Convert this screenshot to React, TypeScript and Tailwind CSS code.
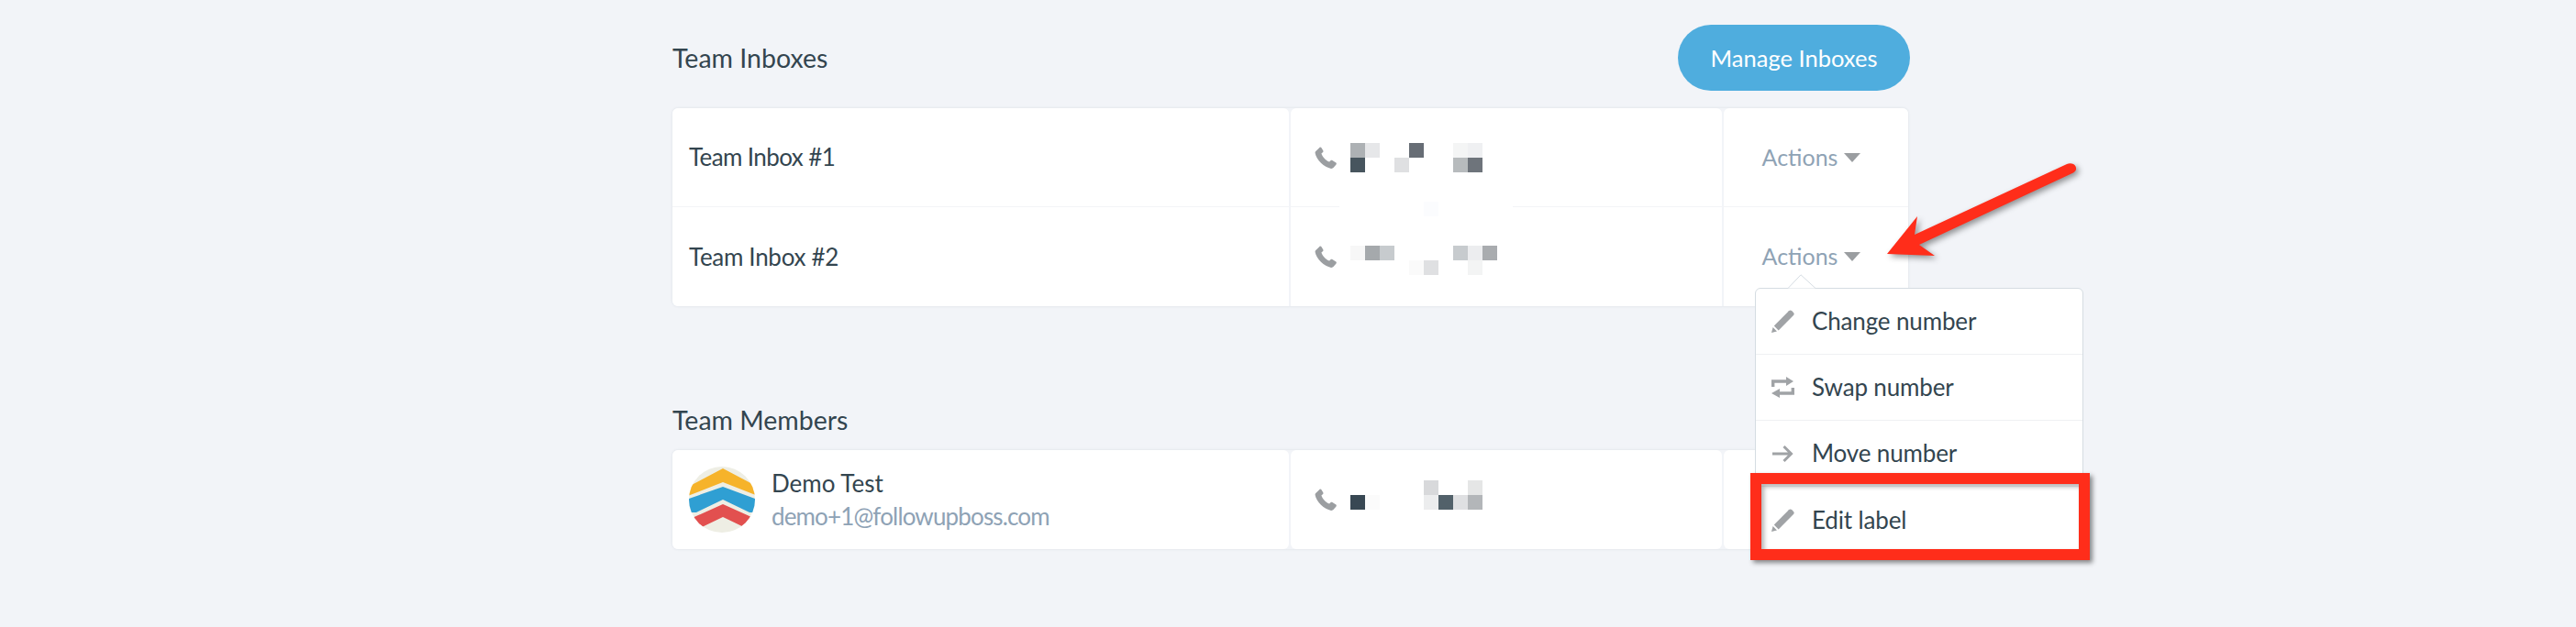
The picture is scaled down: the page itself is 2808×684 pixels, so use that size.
import React from "react";

const font = "font-['Lato','Liberation_Sans',sans-serif]";

type Block = [number, number, string];

const mosaicOne: Block[] = [
  [0, 0, "#adb1b4"], [16, 0, "#e6e7e9"], [64, 0, "#676d75"], [112, 0, "#f4f5f5"], [128, 0, "#eff0f2"],
  [0, 16, "#47555e"], [48, 16, "#dfe0e2"], [112, 16, "#b7bbbd"], [128, 16, "#6e747b"],
];
const mosaicTwo: Block[] = [
  [0, 0, "#f7f7f7"], [16, 0, "#a5a9ac"], [32, 0, "#c7cbce"], [112, 0, "#c7cbce"], [128, 0, "#ecedef"], [144, 0, "#a9acaf"],
  [64, 16, "#fafafa"], [80, 16, "#dfe0e2"], [128, 16, "#f3f4f4"],
];
const mosaicThree: Block[] = [
  [80, 0, "#d8d9db"], [128, 0, "#e5e6e6"],
  [0, 16, "#384853"], [16, 16, "#fbfbfb"], [80, 16, "#ecedee"], [96, 16, "#52616a"], [112, 16, "#dfe0e2"], [128, 16, "#b3b6b9"],
];

const PhoneIcon = () => (
  <svg width="24" height="24" viewBox="0 0 24 24" className="shrink-0">
    <path d="M1 5.2 5.4.9c.6-.6 1.4-.5 1.9.1l2 3.2c.4.6.3 1.2-.2 1.7L7.4 7.500c1.100 3.600 4.700 7.500 8.700 9.100l1.500-1.500c.5-.5 1.200-.6 1.800-.1l3.900 2.600c.6.4.7 1.200.2 1.800l-2.800 3.400c-.7.800-1.600 1.200-2.700 1.100C10.500 22.800 1.800 14.500.6 7.100.5 6.400.6 5.700 1 5.200Z" fill="#9b9ea1" />
  </svg>
);

const Mosaic = ({ blocks, className = "" }: { blocks: Block[]; className?: string }) => (
  <svg width="160" height="32" className={`shrink-0 ml-[15px] ${className}`}>
    {blocks.map(([x, y, c]) => (
      <rect key={`${x}-${y}`} x={x} y={y} width="16" height="16" fill={c} />
    ))}
  </svg>
);

const Caret = () => <span className="w-0 h-0 border-x-[9px] border-x-transparent border-t-[10px] border-t-[#9b9ea1]" />;

const Actions = () => (
  <span className="flex items-center gap-[7px] pr-[10px] text-[25px] text-[#8fa3b5]">
    Actions
    <Caret />
  </span>
);

const PencilIcon = () => (
  <svg width="25" height="25" viewBox="0 0 25 25">
    <path d="M0 25 1.600 19 6 23.400Z" fill="#a0a3a6" />
    <path d="M2.800 17.500 18.900 1.300c1-1 2.300-1 3.200-.2l1.900 1.900c.9.900.9 2.200 0 3.100L7.700 22.400Z" fill="#a0a3a6" />
  </svg>
);

const SwapIcon = () => (
  <svg width="25" height="23" viewBox="0 0 25 23" fill="none">
    <path d="M1.700 11V5H17M23.300 12v6H8" stroke="#a0a3a6" strokeWidth="3.400" />
    <path d="M16 0l8 5-8 5ZM9 13l-9 5 9 5Z" fill="#a0a3a6" />
  </svg>
);

const MoveIcon = () => (
  <svg width="23" height="20" viewBox="0 0 23 20" fill="none">
    <path d="M0 10H20.500M12.500 2l8 8-8 8" stroke="#a0a3a6" strokeWidth="3" />
  </svg>
);

const Avatar = () => (
  <svg width="72" height="72" viewBox="0 0 72 72" className="rounded-full shrink-0 bg-[#eeeee4]">
    <path d="M37 2 75 22V32L37 17-1 32V22Z" fill="#f6b32a" />
    <path d="M37 22 75 36V50H66L37 36 8 50H-3V36Z" fill="#2f9fd3" />
    <path d="M37 41 75 58V68H64L37 55 10 68H-1V58Z" fill="#e2504f" />
  </svg>
);

const menuItems = [
  { label: "Change number", icon: <PencilIcon /> },
  { label: "Swap number", icon: <SwapIcon /> },
  { label: "Move number", icon: <MoveIcon /> },
  { label: "Edit label", icon: <PencilIcon /> },
];

const Dropdown = () => (
  <div className="absolute left-[34px] top-[88px] w-[358px] z-10">
    <svg width="32" height="16" className="absolute left-[36px] top-[-15px] z-10">
      <path d="M0 15.500 14 .8 30 15.500" fill="#fff" stroke="#d5dce2" />
    </svg>
    <div className="bg-white border border-[#d5dce2] rounded-[6px] text-[26px] tracking-[-0.15px] text-[#33454f]">
      {menuItems.map((item) => (
        <div key={item.label} className="h-[72px] flex items-center pl-[17px] border-b border-[#eff1f3] last:border-b-0">
          <span className="w-[25px] flex justify-center">{item.icon}</span>
          <span className="ml-[19px]">{item.label}</span>
        </div>
      ))}
    </div>
    {/* annotation round the last item */}
    <div className="absolute left-[-5px] top-[202px] w-[370px] h-[95px] border-[12px] border-[#ff2d1a] shadow-[3px_3px_5px_rgba(0,0,0,0.45),inset_3px_3px_5px_rgba(0,0,0,0.3)]" />
  </div>
);

const cell = "bg-white flex items-center";

const App = () => {
  return (
    <div className={`relative min-h-[684px] w-full bg-[#f2f4f8] pt-[27px] pl-[733px] ${font}`}>
      <div className="w-[1347px] text-[26px] text-[#33454f]">
        <div className="flex items-center justify-between h-[72px]">
          <h2 className="text-[28.500px] font-normal">Team Inboxes</h2>
          <button className="h-[72px] w-[253px] -mr-[2px] rounded-full bg-[#4fadde] text-white text-[25.500px]">Manage Inboxes</button>
        </div>

        <div className="mt-[19px] rounded-[6px] shadow-[0_0_3px_rgba(50,70,90,0.12)]">
          <div className="grid grid-cols-[672px_470px_1fr] gap-x-[2px] bg-[#f2f4f8] rounded-t-[6px] border-b border-[#f3f4f7]">
            <div className={`${cell} h-[107px] pl-[18px] tracking-[-0.6px] rounded-t-[6px]`}>Team Inbox #1</div>
            <div className={`${cell} h-[107px] pl-[26px] rounded-t-[6px]`}>
              <PhoneIcon />
              <Mosaic blocks={mosaicOne} />
            </div>
            <div className={`${cell} h-[107px] justify-center rounded-t-[6px]`}>
              <Actions />
            </div>
          </div>
          <div className="grid grid-cols-[672px_470px_1fr] gap-x-[2px] bg-[#f2f4f8] rounded-b-[6px]">
            <div className={`${cell} h-[108px] pl-[18px] tracking-[-0.3px] rounded-bl-[6px]`}>Team Inbox #2</div>
            <div className={`${cell} relative h-[108px] pl-[26px]`}>
              <PhoneIcon />
              <Mosaic blocks={mosaicTwo} className="mt-[8px]" />
              {/* the blur in the source wipes the row line here */}
              <span className="absolute left-[53px] top-[-7px] w-[189px] h-[8px] bg-white" />
              <span className="absolute left-[145px] top-[-6px] w-[16px] h-[16px] bg-[#fbfcfe]" />
            </div>
            <div className={`${cell} relative h-[108px] justify-center rounded-br-[6px]`}>
              <Actions />
              <Dropdown />
            </div>
          </div>
        </div>

        <h2 className="mt-[104px] h-[40px] flex items-center text-[28.500px] font-normal">Team Members</h2>

        <div className="mt-[13px] rounded-[6px] shadow-[0_0_3px_rgba(50,70,90,0.12)]">
          <div className="grid grid-cols-[672px_470px_1fr] gap-x-[2px] bg-[#f2f4f8] rounded-[6px]">
            <div className={`${cell} h-[108px] pl-[18px] rounded-[6px]`}>
              <Avatar />
              <div className="ml-[18px] flex flex-col gap-[4px]">
                <span className="leading-[32px]">Demo Test</span>
                <span className="leading-[32px] tracking-[-0.85px] text-[#8ea2b5]">demo+1@followupboss.com</span>
              </div>
            </div>
            <div className={`${cell} h-[108px] pl-[26px] rounded-[6px]`}>
              <PhoneIcon />
              <Mosaic blocks={mosaicThree} className="mb-[10px]" />
            </div>
            <div className={`${cell} h-[108px] rounded-[6px]`} />
          </div>
        </div>
      </div>

      {/* annotation arrow */}
      <svg width="230" height="120" viewBox="2050 170 230 120" className="absolute left-[2050px] top-[170px] z-20 drop-shadow-[3px_3px_3px_rgba(0,0,0,0.4)]">
        <path d="M2057 277 2090 236 2087 256 2253 179C2256 177.500 2261 178 2262.500 181.500 2264 185 2262.500 187 2260 188.500L2092 267 2109 279Z" fill="#ff2d1a" />
      </svg>
    </div>
  );
};

export default App;
